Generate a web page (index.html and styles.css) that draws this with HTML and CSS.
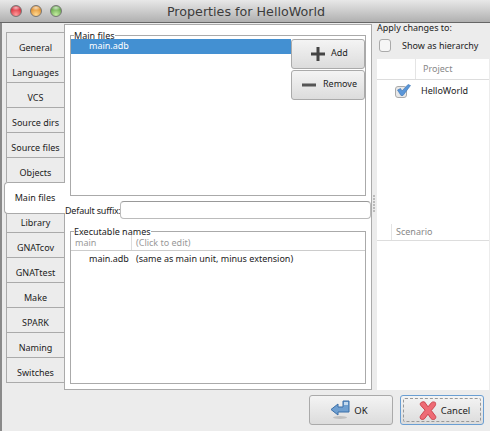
FILE: index.html
```html
<!DOCTYPE html>
<html lang="en">
<head>
    <meta charset="UTF-8">
    <meta name="viewport" content="width=device-width, initial-scale=1.0">
    <title>Properties for HelloWorld</title>
    <link rel="stylesheet" href="styles.css">
</head>
<body>
    <div class="window">
        <div class="titlebar">
            <div class="lights">
                <span class="light red"></span>
                <span class="light orange"></span>
                <span class="light green"></span>
            </div>
            <div class="title">Properties for HelloWorld</div>
        </div>

        <div class="content">
            <div class="tabs">
                <div class="tab">General</div>
                <div class="tab">Languages</div>
                <div class="tab">VCS</div>
                <div class="tab">Source dirs</div>
                <div class="tab">Source files</div>
                <div class="tab">Objects</div>
                <div class="tab selected">Main files</div>
                <div class="tab">Library</div>
                <div class="tab">GNATcov</div>
                <div class="tab">GNATtest</div>
                <div class="tab">Make</div>
                <div class="tab">SPARK</div>
                <div class="tab">Naming</div>
                <div class="tab last">Switches</div>
            </div>

            <div class="panel">
                <fieldset class="frame main-frame">
                    <legend>Main files</legend>
                    <div class="file-list">
                        <div class="file-row">main.adb</div>
                    </div>
                    <div class="side-buttons">
                        <button class="btn side-btn add-btn">
                            <svg width="14" height="14" viewBox="0 0 14 14"><path d="M5.500 0h3v5.500H14v3H8.500V14h-3V8.500H0v-3h5.500z" fill="#444"/></svg>
                            <span>Add</span>
                        </button>
                        <button class="btn side-btn remove-btn">
                            <svg width="14" height="14" viewBox="0 0 14 14"><rect y="5.500" width="14" height="3" fill="#555"/></svg>
                            <span>Remove</span>
                        </button>
                    </div>
                </fieldset>

                <div class="suffix">
                    <label>Default suffix:</label>
                    <input type="text" class="suffix-input">
                </div>

                <fieldset class="frame exec-frame">
                    <legend>Executable names</legend>
                    <div class="exec-head">
                        <div class="exec-col1">main</div>
                        <div class="exec-col2">(Click to edit)</div>
                    </div>
                    <div class="exec-row">
                        <div class="exec-col1 exec-file">main.adb</div>
                        <div class="exec-col2">(same as main unit, minus extension)</div>
                    </div>
                </fieldset>
            </div>

            <div class="splitter"><i></i><i></i><i></i><i></i><i></i><i></i></div>

            <div class="side">
                <div class="apply">Apply changes to:</div>
                <div class="hierarchy">
                    <span class="checkbox"></span>
                    <span>Show as hierarchy</span>
                </div>
                <div class="tree">
                    <div class="tree-head project-head">
                        <div class="tree-spacer"></div>
                        <div class="tree-title">Project</div>
                    </div>
                    <div class="project-row">
                        <span class="checkbox small">
                            <svg width="15" height="12" viewBox="0 0 15 12"><path d="M1.500 6l3-1.500L6 7l6-6.500 2.500 1L7 11.500H5z" fill="#5a96d8" stroke="#3a74b4" stroke-width="0.6"/></svg>
                        </span>
                        <span>HelloWorld</span>
                    </div>
                    <div class="tree-head scenario-head">
                        <div class="tree-spacer narrow"></div>
                        <div class="tree-title">Scenario</div>
                    </div>
                </div>
            </div>
        </div>

        <div class="actions">
            <button class="btn action-btn ok-btn">
                <svg width="20" height="20" viewBox="0 0 20 20">
                    <ellipse cx="10" cy="17.500" rx="7" ry="1.500" fill="#c0c0c0"/>
                    <path d="M1 9.500L8 4v3h5V1h6v11H8v3z" fill="#6f9fd0" stroke="#3a6ea8"/>
                    <path d="M14 2h4v3h-4z" fill="#c4daef"/>
                </svg>
                <span>OK</span>
            </button>
            <button class="btn action-btn focused">
                <span class="focus-ring">
                    <svg width="18" height="19" viewBox="0 0 24 26">
                        <path d="M2 2.500c2-1.500 4-2 5.500-1L12 8l5-6c1.500-1 3-1 5 0 .8 2 .5 3.500-.5 5L16.500 13l6 8c.5 2 0 3-1.500 4-2 .8-3.500.5-5-1L12 18l-5 6.500c-1.500 1-3.500 1-5 0-1-1.500-1-3 0-4.500l6-7.500L2 6c-.8-1-.8-2.500 0-3.500z" fill="#ee6b75" stroke="#c8404a" stroke-width="1.300"/>
                    </svg>
                    <span>Cancel</span>
                </span>
            </button>
        </div>
    </div>
</body>
</html>
```

FILE: styles.css
```css
* {
    box-sizing: border-box;
}
body {
    margin: 0;
    font-family: "Noto Sans", sans-serif;
    font-size: 9px;
    color: #222;
    background-color: #ececec;
    overflow: hidden;
}
.window {
    width: 490px;
    height: 431px;
    border-left: 2px solid #8a8a8a;
    display: flex;
    flex-direction: column;
}

/* title bar */
.titlebar {
    height: 23px;
    flex: none;
    display: flex;
    align-items: center;
    margin-left: -2px;
    background: linear-gradient(#e8e8e8, #b0b0b0);
    border-bottom: 1px solid #666;
    position: relative;
}
.lights {
    display: flex;
    gap: 8px;
    padding-left: 10px;
}
.light {
    width: 12px;
    height: 12px;
    border-radius: 50%;
    border: 1px solid #777;
}
.red {
    background: radial-gradient(ellipse 50% 25% at 50% 18%, rgba(255, 255, 255, 0.7), transparent), radial-gradient(circle at 50% 85%, #ff9a9a, #d8303c 70%);
}
.orange {
    background: radial-gradient(ellipse 50% 25% at 50% 18%, rgba(255, 255, 255, 0.7), transparent), radial-gradient(circle at 50% 85%, #ffd890, #e09030 70%);
}
.green {
    background: radial-gradient(ellipse 50% 25% at 50% 18%, rgba(255, 255, 255, 0.7), transparent), radial-gradient(circle at 50% 85%, #c4eca0, #66a84c 70%);
}
.title {
    position: absolute;
    left: 0;
    right: 0;
    text-align: center;
    padding-left: 2px;
    font-family: "DejaVu Sans", sans-serif;
    font-size: 12.700px;
    color: #3c3c3c;
}

/* main area */
.content {
    height: 367px;
    flex: none;
    display: flex;
}
.tabs {
    width: 58px;
    margin-left: 4px;
    padding-top: 9px;
    flex: none;
    position: relative;
}
.tab {
    height: 25px;
    padding-top: 9px;
    line-height: 12px;
    text-align: center;
    border: 1px solid #aaa;
    border-bottom: none;
    border-right: none;
    background-color: #ececec;
}
.tab.selected {
    height: 32px;
    margin: 0 -1px -7px -2px;
    padding-top: 9px;
    background-color: #fff;
    border-radius: 4px 0 0 4px;
    position: relative;
    border-bottom: 1px solid #aaa;
    z-index: 1;
}
.tab.last {
    height: 26px;
    border-bottom: 1px solid #aaa;
}
.panel {
    width: 308px;
    flex: none;
    margin-top: 1px;
    background-color: #fff;
    border: 1px solid #aaa;
    height: 366px;
    padding: 7px 5px 0 0;
}
.frame {
    margin: 0 0 0 5px;
    padding: 0;
    border: 1px solid #aaa;
    min-width: 0;
}
.frame legend {
    padding: 0;
    margin-left: 3px;
    height: 7px;
    line-height: 7px;
    color: #222;
}
.main-frame {
    height: 164px;
    display: flex;
    align-items: flex-start;
}
.file-list {
    flex: 1;
}
.file-row {
    height: 15px;
    line-height: 14px;
    padding-left: 18px;
    background-color: #4390d2;
    color: #fff;
}
.side-buttons {
    width: 74px;
    flex: none;
    display: flex;
    flex-direction: column;
    gap: 1px;
}
.btn {
    font-family: inherit;
    font-size: 9px;
    color: #222;
    background: linear-gradient(#f4f4f4, #dcdcdc);
    border: 1px solid #aaa;
    border-radius: 3px;
    padding: 0;
}
.side-btn {
    height: 30px;
    display: flex;
    align-items: center;
}
.side-btn svg {
    flex: none;
}
.side-btn span {
    margin-top: -3px;
}
.add-btn svg {
    margin-left: 19px;
    margin-right: 6px;
}
.remove-btn svg {
    margin-left: 10px;
    margin-right: 7px;
}
.suffix {
    display: flex;
    align-items: center;
    height: 18px;
    margin-top: 5px;
    margin-right: -5px;
}
.suffix label {
    width: 55px;
    flex: none;
    white-space: nowrap;
    letter-spacing: -0.2px;
}
.suffix-input {
    flex: 1;
    height: 18px;
    min-width: 0;
    border: 1px solid #bbb;
    border-top-color: #999;
    border-radius: 4px;
    background-color: #fff;
}
.exec-frame {
    height: 156px;
    margin-top: 9px;
}
.exec-head {
    display: flex;
    height: 16px;
    color: #999;
    border-bottom: 1px solid #ccc;
    align-items: center;
}
.exec-col1 {
    width: 60px;
    flex: none;
    padding-left: 4px;
}
.exec-head .exec-col2 {
    border-left: 1px solid #ddd;
    padding-left: 4px;
    height: 15px;
    line-height: 15px;
}
.exec-head .exec-col1 {
    line-height: 15px;
}
.exec-row {
    display: flex;
    height: 15px;
    align-items: center;
}
.exec-file {
    padding-left: 18px;
}
.exec-row .exec-col2 {
    padding-left: 5px;
    white-space: nowrap;
}

/* splitter */
.splitter {
    width: 5px;
    flex: none;
    display: flex;
    flex-direction: column;
    gap: 1px;
    padding: 172px 0 0 1px;
}
.splitter i {
    width: 2px;
    height: 2px;
    background-color: #bbb;
}

/* right side */
.side {
    flex: 1;
    min-width: 0;
    display: flex;
    flex-direction: column;
    padding-right: 1px;
}
.apply {
    height: 15px;
    line-height: 10px;
}
.hierarchy {
    display: flex;
    align-items: center;
    height: 21px;
    padding: 0 0 6px 2px;
    gap: 11px;
}
.checkbox {
    width: 12px;
    height: 13px;
    flex: none;
    border: 1px solid #aaa;
    border-radius: 3px;
    background-color: #f6f6f6;
}
.tree {
    flex: 1;
    background-color: #fff;
}
.tree-head {
    display: flex;
    height: 21px;
    color: #888;
    border-bottom: 1px solid #ddd;
}
.tree-spacer {
    width: 39px;
    flex: none;
    border-right: 1px solid #e4e4e4;
}
.tree-spacer.narrow {
    width: 15px;
}
.tree-title {
    padding-left: 7px;
    line-height: 20px;
}
.scenario-head .tree-title {
    padding-left: 4px;
    line-height: 15px;
}
.scenario-head {
    height: 17px;
    margin-top: 124px;
}
.project-row {
    display: flex;
    align-items: center;
    height: 20px;
    color: #222;
    padding-left: 18px;
    gap: 14px;
}
.checkbox.small {
    position: relative;
    top: 2px;
    width: 12px;
    height: 12px;
    background-color: #e8e8e8;
}
.checkbox.small svg {
    display: block;
    margin: -3px 0 0 0;
}

/* bottom buttons */
.actions {
    flex: 1;
    display: flex;
    justify-content: flex-end;
    gap: 7px;
    padding: 5px 6px 0 0;
}
.action-btn {
    width: 84px;
    height: 30px;
    font-size: 9.500px;
    display: flex;
    align-items: center;
    justify-content: center;
    gap: 4px;
}
.ok-btn {
    padding-right: 4px;
}
.action-btn.focused {
    border-color: #6a9ed2;
    padding: 2px;
}
.focus-ring {
    flex: 1;
    height: 100%;
    display: flex;
    align-items: center;
    justify-content: center;
    gap: 4px;
    padding-left: 5px;
    border: 1px dashed #999;
    border-radius: 2px;
}
```
